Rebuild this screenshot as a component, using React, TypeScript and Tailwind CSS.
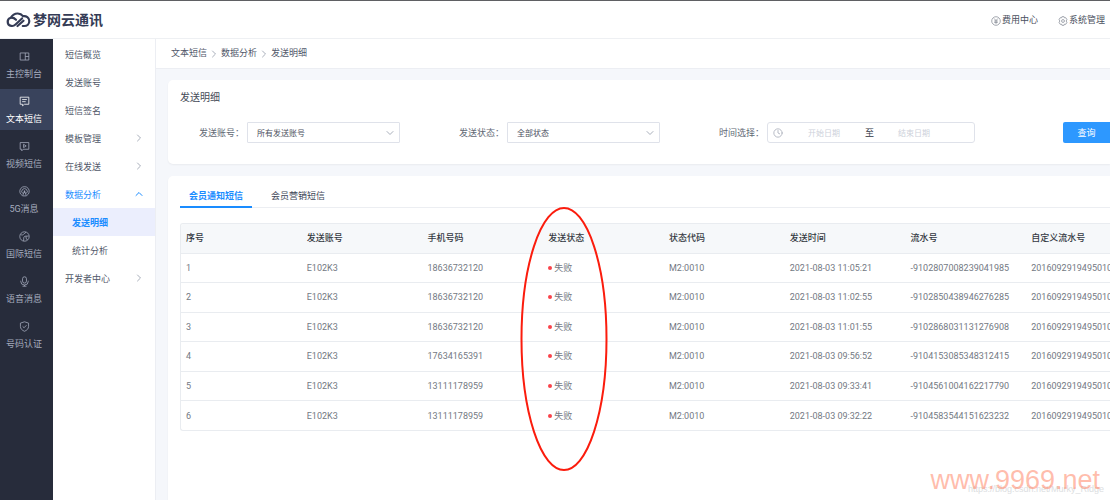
import type { ReactNode } from "react";
import clsx from "clsx";
import { ChevronDown, ChevronRight, ChevronUp, Clock } from "lucide-react";

type NavItem = { label: string; icon: ReactNode; active?: boolean };
type MenuItem = { label: string; arrow?: "right" | "up"; active?: boolean; open?: boolean; child?: boolean };
type SmsRecord = { id: number; account: string; phone: string; status: string; code: string; time: string; serial: string; custom: string };

const navItems: NavItem[] = [
  { label: "主控制台", icon: <path d="M1.5 2.5h11v9h-11zM8 2.5v9M8 7h4.5" /> },
  {
    label: "文本短信",
    active: true,
    icon: <path d="M1.5 1.500h11v9H7l-2.500 2v-2h-3zM4 4.500h6M4 7.200h4.500" />,
  },
  {
    label: "视频短信",
    icon: <path d="M1.5 2h11v8.5H5.5l-2 2v-2h-2zM5.8 4.2v4.2l3.4-2.1z" />,
  },
  {
    label: "5G消息",
    icon: <path d="M4 12a6 6 0 1 1 6 0M5 9.7a3.5 3.5 0 1 1 4 0M7 6l-2.4 6.6h4.8zM7 6v3" />,
  },
  {
    label: "国际短信",
    icon: <path d="M7 1a6 6 0 1 0 0 12A6 6 0 0 0 7 1zM2 4.500c2 1 3 .5 4-.5s2-1.500 3-2.500M6 12.800V9c0-2 1.500-2.500 3-2.500h3.500M9 6.500V9l1.500 2.500" />,
  },
  {
    label: "语音消息",
    icon: <path d="M7 1a2.5 2.5 0 0 0-2.5 2.5v3a2.5 2.5 0 0 0 5 0v-3A2.5 2.5 0 0 0 7 1zM2.2 6v.7a4.8 4.8 0 0 0 9.6 0V6M7 11.5V13M4.5 13h5" />,
  },
  {
    label: "号码认证",
    icon: <path d="M7 1l5.200 1.700v4.200c0 3-2.200 5-5.200 6.200-3-1.200-5.200-3.200-5.200-6.200V2.700zM4.600 6.800l1.900 1.800 3-3.200" />,
  },
];

const menuItems: MenuItem[] = [
  { label: "短信概览" },
  { label: "发送账号" },
  { label: "短信签名" },
  { label: "模板管理", arrow: "right" },
  { label: "在线发送", arrow: "right" },
  { label: "数据分析", arrow: "up", open: true },
  { label: "发送明细", active: true, child: true },
  { label: "统计分析", child: true },
  { label: "开发者中心", arrow: "right" },
];

const columns = ["序号", "发送账号", "手机号码", "发送状态", "状态代码", "发送时间", "流水号", "自定义流水号"];

const base = { account: "E102K3", status: "失败", code: "M2:0010", custom: "2016092919495010" };
const records: SmsRecord[] = [
  { id: 1, ...base, phone: "18636732120", time: "2021-08-03 11:05:21", serial: "-9102807008239041985" },
  { id: 2, ...base, phone: "18636732120", time: "2021-08-03 11:02:55", serial: "-9102850438946276285" },
  { id: 3, ...base, phone: "18636732120", time: "2021-08-03 11:01:55", serial: "-9102868031131276908" },
  { id: 4, ...base, phone: "17634165391", time: "2021-08-03 09:56:52", serial: "-9104153085348312415" },
  { id: 5, ...base, phone: "13111178959", time: "2021-08-03 09:33:41", serial: "-9104561004162217790" },
  { id: 6, ...base, phone: "13111178959", time: "2021-08-03 09:32:22", serial: "-9104583544151623232" },
];

function Header() {
  return (
    <header className="flex h-[39px] shrink-0 items-center justify-between border-t border-b border-t-[#5f6063] border-b-[#eef0f3] bg-white pr-[5px] pl-[6px]">
      <a href="#" className="flex items-center gap-[2px] text-[#343b55]">
        <svg viewBox="0 0 25 16" className="h-4 w-[25px]" fill="none" stroke="currentColor" strokeWidth="2.200" strokeLinecap="round">
          <path d="M16 6.500L9.500 12.500C8 13.900 6.500 14.200 5.200 13.900a4.200 4.200 0 0 1-.4-8.200C6.500 2.800 9 1.400 11.800 1.500c2.200.1 4 1.100 5.200 2.700 3.200-.6 6.300 1.400 6.300 4.800 0 2.900-2.300 5-5 5h-1.500" />
          <path d="M5.200 5.700C7.500 5.400 9 6.800 10 7.800M11.500 14l6-5.300" />
        </svg>
        <span className="text-[14px] leading-5 font-bold">梦网云通讯</span>
      </a>
      <nav className="flex items-center gap-5 pt-[2px] text-[9px] text-[#4a5060]">
        <a href="#" className="flex items-center gap-px">
          <svg viewBox="0 0 14 14" className="size-[10px]" fill="none" stroke="#7f8490">
            <circle cx="7" cy="7" r="6" />
            <path d="M4.500 3.500L7 6.500l2.500-3M7 6.500v4.500M4.500 7h5M4.500 9h5" />
          </svg>
          费用中心
        </a>
        <a href="#" className="flex items-center gap-px">
          <svg viewBox="0 0 14 14" className="size-[10px]" fill="none" stroke="#7f8490">
            <path d="M5.500 1h3l.6 1.600 1.800-.2L12.500 5l-1.100 2 1.100 2-1.600 2.600-1.800-.2-.6 1.600h-3l-.6-1.600-1.800.2L1.500 9l1.100-2-1.100-2 1.600-2.600 1.800.2z" />
            <circle cx="7" cy="7" r="2" />
          </svg>
          系统管理
        </a>
      </nav>
    </header>
  );
}

function SideNav() {
  return (
    <nav className="flex w-[53px] shrink-0 flex-col gap-1 bg-[#272c3b] pt-[5px]">
      {navItems.map((item) => (
        <a
          key={item.label}
          href="#"
          className={clsx(
            "flex h-[41px] flex-col items-center gap-[6px] pt-[7px] pr-[5px] text-[9px] leading-3",
            item.active ? "bg-[#39435c] text-white" : "text-[#a4abbd]"
          )}
        >
          <svg viewBox="0 0 14 14" className="size-[11px] shrink-0" fill="none" stroke="currentColor" strokeLinejoin="round">
            {item.icon}
          </svg>
          <span>{item.label}</span>
        </a>
      ))}
    </nav>
  );
}

function SubMenu() {
  return (
    <nav className="w-[103px] shrink-0 border-r border-[#eceef3] bg-white pt-px">
      {menuItems.map((item) => (
        <a
          key={item.label}
          href="#"
          className={clsx(
            "flex h-7 items-center justify-between pr-[10px] text-[9px]",
            item.child ? "pl-[19px]" : "pl-3",
            item.active && "bg-[#ebeefd] font-bold",
            item.active || item.open ? "text-[#1a8cff]" : "text-[#51586a]"
          )}
        >
          <span className="pt-1">{item.label}</span>
          {item.arrow === "right" && <ChevronRight className="size-3 text-[#a9afbb]" />}
          {item.arrow === "up" && <ChevronUp className="size-3" />}
        </a>
      ))}
    </nav>
  );
}

function SelectField({ id, label, option }: { id: string; label: string; option: string }) {
  return (
    <div className="flex items-center gap-[3px]">
      <label htmlFor={id} className="w-[45px] pt-[2px]">{label}：</label>
      <div className="relative">
        <select
          id={id}
          className="block h-[21px] w-[153px] appearance-none rounded-[1px] border border-[#dfe2ea] bg-white pt-[2px] pl-[9px] text-[8px] text-[#4c5160]"
        >
          <option>{option}</option>
        </select>
        <ChevronDown className="pointer-events-none absolute top-[5px] right-1 size-3 text-[#a9afbb]" />
      </div>
    </div>
  );
}

function SearchCard() {
  return (
    <section className="rounded-l-[5px] bg-white pt-[10px] pb-[21px] pl-3 shadow-xs">
      <h1 className="text-[10px] leading-4 text-[#454b58]">发送明细</h1>
      <form className="mt-4 flex items-center gap-[59px] pl-[19px] text-[9px] whitespace-nowrap text-[#626975]">
        <SelectField id="account" label="发送账号" option="所有发送账号" />
        <SelectField id="status" label="发送状态" option="全部状态" />
        <div className="flex items-center gap-[3px]">
          <label htmlFor="start" className="w-[45px] pt-[2px]">时间选择：</label>
          <div className="flex h-[21px] w-[208px] items-center rounded-[3px] border border-[#dfe2ea] pl-[5px] text-[8px]">
            <Clock className="size-[10px] shrink-0 text-[#a9afbb]" />
            <input id="start" placeholder="开始日期" className="w-[82px] pt-[2px] text-center placeholder:text-[#cdd1da]" />
            <span className="pt-[2px] text-[9px] text-[#30343f]">至</span>
            <input aria-label="结束日期" placeholder="结束日期" className="w-20 pt-[2px] text-center placeholder:text-[#cdd1da]" />
          </div>
        </div>
        <button type="button" className="ml-auto h-[21px] w-[47px] shrink-0 rounded-l-[2px] bg-[#2d98ff] pt-[2px] text-[9px] text-white">
          查询
        </button>
      </form>
    </section>
  );
}

function RecordTable() {
  return (
    <div className="mt-[15px] overflow-hidden rounded-l-[3px] border-y border-l border-[#e9ecf0]">
      <table className="h-[206px] w-[966px] table-fixed text-left text-[9px] leading-3">
        <thead className="bg-[#f6f8fa] text-[#343842]">
          <tr>
            {columns.map((name) => (
              <th key={name} className="h-[29px] pl-[5px] font-medium">{name}</th>
            ))}
          </tr>
        </thead>
        <tbody className="text-[#737983]">
          {records.map((r) => (
            <tr key={r.id} className="h-[29px] border-t border-[#e9ecf0]">
              <td className="pl-[5px]">{r.id}</td>
              <td className="pl-[5px]">{r.account}</td>
              <td className="pl-[5px]">{r.phone}</td>
              <td className="pl-[5px]">
                <span className="flex items-center gap-[2px]">
                  <i className="size-1 rounded-full bg-[#f9434a]" />
                  {r.status}
                </span>
              </td>
              <td className="pl-[5px]">{r.code}</td>
              <td className="pl-[5px]">{r.time}</td>
              <td className="pl-[5px]">{r.serial}</td>
              <td className="pl-[5px]">{r.custom}</td>
            </tr>
          ))}
        </tbody>
      </table>
    </div>
  );
}

export default function App() {
  return (
    <div className="relative flex min-h-screen flex-col overflow-hidden bg-[#f5f7fb] font-[Roboto,'Noto_Sans_CJK_SC',sans-serif]">
      <Header />
      <div className="flex grow">
        <SideNav />
        <SubMenu />
        <main className="flex min-w-0 grow flex-col">
          <nav className="flex h-[30px] items-center gap-px border-b border-[#eceef3] bg-white pt-px pl-[15px] text-[9px] text-[#51586a]">
            <a href="#">文本短信</a>
            <ChevronRight className="size-3 text-[#a9afbb]" />
            <a href="#">数据分析</a>
            <ChevronRight className="size-3 text-[#a9afbb]" />
            <span>发送明细</span>
          </nav>
          <div className="flex grow flex-col gap-3 pt-[11px] pl-3">
            <SearchCard />
            <section className="grow rounded-tl-[5px] bg-white pt-[10px] pl-3 shadow-xs">
              <div className="flex gap-[10px] border-b border-[#eceef2] text-[9px] leading-5">
                <button type="button" className="-mb-px border-b-2 border-[#1a8cff] px-[9px] font-bold text-[#1a8cff]">会员通知短信</button>
                <button type="button" className="-mb-px border-b-2 border-transparent px-[9px] text-[#3d4456]">会员营销短信</button>
              </div>
              <RecordTable />
            </section>
          </div>
        </main>
      </div>

      {/* annotation over the status column */}
      <svg viewBox="0 0 88 264" className="pointer-events-none absolute top-[207px] left-[520px] h-[264px] w-[88px]" fill="none" stroke="#fb1c0d" strokeWidth="2">
        <ellipse cx="44" cy="132" rx="42.500" ry="131" />
      </svg>
      <span className="absolute right-[6px] bottom-[5px] font-['Liberation_Sans',sans-serif] text-[9px] leading-3 text-[#dcdee1]">
        https://blog.csdn.net/Murky_Ridge
      </span>
      <span className="absolute right-[10px] bottom-1 font-['Liberation_Sans',sans-serif] text-[27px] leading-8 text-[#ff7b5a]/50">
        www.9969.net
      </span>
    </div>
  );
}
